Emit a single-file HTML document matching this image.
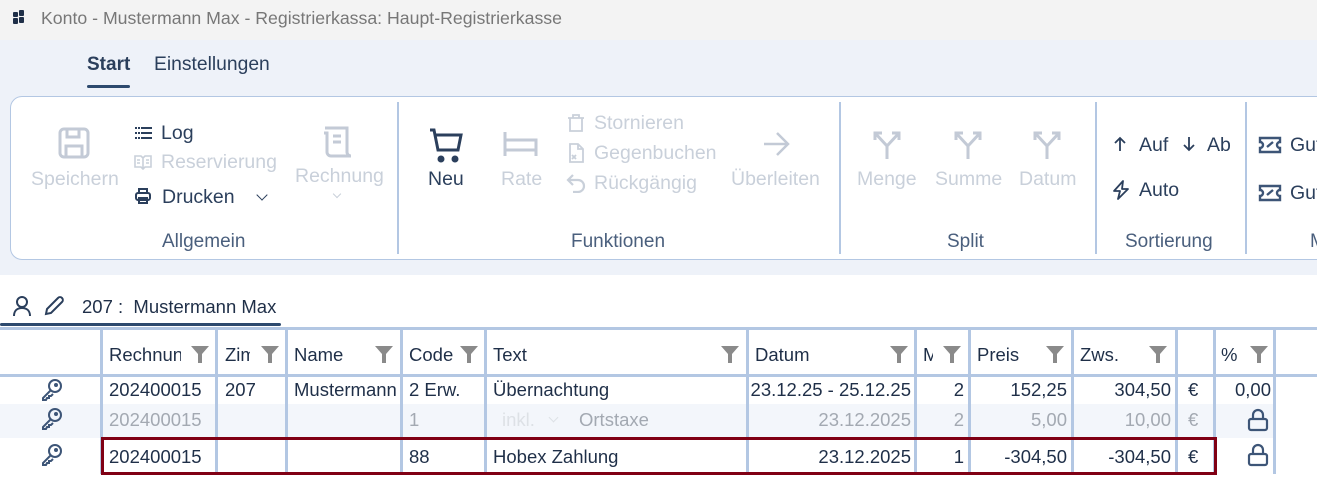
<!DOCTYPE html>
<html><head><meta charset="utf-8"><style>
*{box-sizing:border-box;margin:0;padding:0}
body{width:1317px;height:490px;overflow:hidden;background:#fff;font-family:"Liberation Sans",sans-serif;position:relative;color:#2b3f5c}
.a{position:absolute;white-space:nowrap}
.dis{color:#c9d0da}
.rb{font-size:19.5px}
.gl{font-size:19px;color:#4a5f7d}
.sep{position:absolute;top:102px;width:2px;height:152px;background:#b3c7e3}
.t{font-size:18.5px;color:#1f2f48}
.vl{position:absolute;width:3px;background:#b3c7e3;top:329px;height:145px}
.f{position:absolute;width:20px;height:20px}
</style></head><body>
<div class="a" style="left:0;top:0;width:1317px;height:40px;background:#f3f3f3"></div>
<div class="a" style="left:13px;top:12px;width:5px;height:5px;background:#1f2f48;border-radius:1px"></div>
<div class="a" style="left:19px;top:10px;width:5px;height:6px;background:#1f2f48;border-radius:1px"></div>
<div class="a" style="left:13px;top:18px;width:5px;height:6px;background:#1f2f48;border-radius:1px"></div>
<div class="a" style="left:19px;top:17px;width:5px;height:6px;background:#1f2f48;border-radius:1px"></div>
<div class="a" style="left:41px;top:8px;font-size:17.7px;color:#777">Konto - Mustermann Max - Registrierkassa: Haupt-Registrierkasse</div>
<div class="a" style="left:0;top:40px;width:1317px;height:235px;background:#eef2f9"></div>
<div class="a" style="left:87px;top:54px;font-size:19px;font-weight:bold;color:#2b3f5c">Start</div>
<div class="a" style="left:87px;top:85px;width:43px;height:3px;background:#2d4a6e;border-radius:2px"></div>
<div class="a" style="left:154px;top:54px;font-size:19.3px;color:#2b3f5c">Einstellungen</div>
<div class="a" style="left:10px;top:96px;width:1330px;height:164px;background:#fff;border:1.5px solid #b3c7e3;border-radius:12px"></div>
<!-- Allgemein -->
<svg class="a" style="left:57px;top:126px" width="34" height="34" viewBox="0 0 34 34" fill="none" stroke="#c3cad6" stroke-width="3"><rect x="3" y="3" width="28" height="28" rx="4"/><path d="M10 3v8h12V3M9 31V20h16v11"/></svg>
<div class="a rb dis" style="left:31px;top:168px">Speichern</div>
<svg class="a" style="left:135px;top:126px" width="17" height="14" fill="#2b3f5c"><rect x="0" y="1" width="2" height="2"/><rect x="3" y="1" width="2" height="2"/><rect x="6" y="1" width="11" height="2"/><rect x="0" y="6" width="2" height="2"/><rect x="3" y="6" width="2" height="2"/><rect x="6" y="6" width="11" height="2"/><rect x="0" y="11" width="2" height="2"/><rect x="3" y="11" width="2" height="2"/><rect x="6" y="11" width="11" height="2"/></svg>
<div class="a rb" style="left:161px;top:122px">Log</div>
<svg class="a" style="left:134px;top:154px" width="18" height="16" viewBox="0 0 18 16" fill="none" stroke="#c9d0da" stroke-width="1.6"><path d="M1 2h6l2 2 2-2h6v11h-6l-2 2-2-2H1zM9 4v11M3 6h3M3 9h3M12 6h3M12 9h3"/></svg>
<div class="a rb dis" style="left:161px;top:151px">Reservierung</div>
<svg class="a" style="left:134px;top:187px" width="18" height="18" viewBox="0 0 18 18" fill="none" stroke="#2b3f5c" stroke-width="2"><rect x="5" y="2" width="8" height="4"/><rect x="2" y="6" width="14" height="7" rx="2"/><rect x="5" y="11" width="8" height="5"/></svg>
<div class="a rb" style="left:162px;top:186px">Drucken</div>
<div class="a" style="left:258px;top:191px;width:8px;height:8px;border-right:1.5px solid #2b3f5c;border-bottom:1.5px solid #2b3f5c;transform:rotate(45deg)"></div>
<svg class="a" style="left:321px;top:125px" width="34" height="34" viewBox="0 0 34 34" fill="none" stroke="#c3cad6" stroke-width="3"><path d="M4 3h22v24a4 4 0 0 0 4 4H10a4 4 0 0 1-4-4V8H3M12 11h8M12 17h8"/></svg>
<div class="a rb dis" style="left:295px;top:165px">Rechnung</div>
<div class="a" style="left:334px;top:191px;width:6px;height:6px;border-right:1px solid #c9d0da;border-bottom:1px solid #c9d0da;transform:rotate(45deg)"></div>
<div class="a gl" style="left:162px;top:231px">Allgemein</div>
<div class="sep" style="left:397px"></div>
<!-- Funktionen -->
<svg class="a" style="left:428px;top:127px" width="36" height="36" viewBox="0 0 36 36" fill="none" stroke="#2b3f5c" stroke-width="3"><path d="M2 3h4l4 20h20l3-15H8"/><circle cx="13" cy="32" r="2" fill="#2b3f5c"/><circle cx="27" cy="32" r="2" fill="#2b3f5c"/></svg>
<div class="a rb" style="left:428px;top:168px">Neu</div>
<svg class="a" style="left:503px;top:130px" width="36" height="28" viewBox="0 0 36 28" fill="none" stroke="#c3cad6" stroke-width="3"><path d="M2 2v24M2 10h31v16M2 20h31"/></svg>
<div class="a rb dis" style="left:501px;top:168px">Rate</div>
<svg class="a" style="left:567px;top:113px" width="18" height="20" viewBox="0 0 18 20" fill="none" stroke="#c9d0da" stroke-width="1.8"><path d="M3 5h12v13H3zM1 5h16M6 5V2h6v3"/></svg>
<div class="a rb dis" style="left:594px;top:112px">Stornieren</div>
<svg class="a" style="left:567px;top:143px" width="18" height="20" viewBox="0 0 18 20" fill="none" stroke="#c9d0da" stroke-width="1.8"><path d="M3 1h8l5 5v13H3zM11 1v5h5M5 12l4 4M9 12l-4 4"/></svg>
<div class="a rb dis" style="left:594px;top:142px">Gegenbuchen</div>
<svg class="a" style="left:566px;top:173px" width="20" height="20" viewBox="0 0 20 20" fill="none" stroke="#c9d0da" stroke-width="2.2"><path d="M7 2L2 7l5 5M2 7h10a6 6 0 0 1 0 12H7"/></svg>
<div class="a rb dis" style="left:594px;top:172px">Rückgängig</div>
<svg class="a" style="left:762px;top:131px" width="28" height="26" viewBox="0 0 28 26" fill="none" stroke="#c3cad6" stroke-width="2.5"><path d="M2 13h24M15 2l11 11-11 11"/></svg>
<div class="a rb dis" style="left:731px;top:168px">Überleiten</div>
<div class="a gl" style="left:571px;top:231px">Funktionen</div>
<div class="sep" style="left:839px"></div>
<!-- Split -->
<svg class="a" style="left:871px;top:128px" width="32" height="32" viewBox="0 0 32 32" fill="none" stroke="#c3cad6" stroke-width="3"><path d="M16 31V18L4 5M4 12V5h7M16 18L28 5M21 5h7v7"/></svg>
<svg class="a" style="left:952px;top:128px" width="32" height="32" viewBox="0 0 32 32" fill="none" stroke="#c3cad6" stroke-width="3"><path d="M16 31V18L4 5M4 12V5h7M16 18L28 5M21 5h7v7"/></svg>
<svg class="a" style="left:1031px;top:128px" width="32" height="32" viewBox="0 0 32 32" fill="none" stroke="#c3cad6" stroke-width="3"><path d="M16 31V18L4 5M4 12V5h7M16 18L28 5M21 5h7v7"/></svg>
<div class="a rb dis" style="left:857px;top:168px">Menge</div>
<div class="a rb dis" style="left:935px;top:168px">Summe</div>
<div class="a rb dis" style="left:1019px;top:168px">Datum</div>
<div class="a gl" style="left:947px;top:231px">Split</div>
<div class="sep" style="left:1095px"></div>
<svg class="a" style="left:1113px;top:136px" width="14" height="16" viewBox="0 0 14 16" fill="none" stroke="#2b3f5c" stroke-width="1.8"><path d="M7 15V2M2 7l5-5 5 5"/></svg>
<div class="a rb" style="left:1139px;top:134px">Auf</div>
<svg class="a" style="left:1182px;top:136px" width="14" height="16" viewBox="0 0 14 16" fill="none" stroke="#2b3f5c" stroke-width="1.8"><path d="M7 1v13M2 9l5 5 5-5"/></svg>
<div class="a rb" style="left:1207px;top:134px">Ab</div>
<svg class="a" style="left:1112px;top:180px" width="18" height="20" viewBox="0 0 18 20" fill="none" stroke="#2b3f5c" stroke-width="1.8" stroke-linejoin="round"><path d="M11 1L2 11h6l-2 8 10-10h-6z"/></svg>
<div class="a rb" style="left:1139px;top:179px">Auto</div>
<div class="a gl" style="left:1125px;top:231px">Sortierung</div>
<div class="sep" style="left:1245px"></div>
<svg class="a" style="left:1258px;top:136px" width="24" height="18" viewBox="0 0 24 18" fill="none" stroke="#3d5577" stroke-width="2.4"><path d="M2 2h20v4a3 3 0 0 0 0 6v4H2v-4a3 3 0 0 0 0-6zM9 11l6-5"/></svg>
<div class="a rb" style="left:1290px;top:134px">Gut</div>
<svg class="a" style="left:1258px;top:184px" width="24" height="18" viewBox="0 0 24 18" fill="none" stroke="#3d5577" stroke-width="2.4"><path d="M2 2h20v4a3 3 0 0 0 0 6v4H2v-4a3 3 0 0 0 0-6zM9 11l6-5"/></svg>
<div class="a rb" style="left:1290px;top:182px">Gut</div>
<div class="a gl" style="left:1310px;top:231px">M</div>
<!-- tab -->
<svg class="a" style="left:12px;top:295px" width="20" height="22" viewBox="0 0 20 22" fill="none" stroke="#2b3f5c" stroke-width="2"><circle cx="10" cy="7" r="5"/><path d="M2 21c0-5 3-8 8-8s8 3 8 8"/></svg>
<svg class="a" style="left:43px;top:295px" width="22" height="22" viewBox="0 0 22 22" fill="none" stroke="#2b3f5c" stroke-width="2"><path d="M3 19l1-5L15 3a2.5 2.5 0 0 1 4 4L8 18z"/></svg>
<div class="a" style="left:82px;top:296px;font-size:18.5px;color:#1f2f48">207 :&nbsp; Mustermann Max</div>
<div class="a" style="left:0;top:323px;width:281px;height:3px;background:#2d4a6e;border-radius:2px"></div>
<!-- table -->
<div class="a" style="left:0;top:327px;width:1317px;height:3px;background:#b3c7e3"></div>
<div class="a" style="left:0;top:374px;width:1317px;height:3px;background:#b3c7e3"></div>
<div class="a" style="left:0;top:404px;width:1275px;height:34px;background:#f3f6fb"></div>
<div class="vl" style="left:100px"></div><div class="vl" style="left:215px"></div><div class="vl" style="left:285px"></div><div class="vl" style="left:400px"></div><div class="vl" style="left:484px"></div><div class="vl" style="left:746px"></div><div class="vl" style="left:914px"></div><div class="vl" style="left:968px"></div><div class="vl" style="left:1071px"></div><div class="vl" style="left:1175px"></div><div class="vl" style="left:1213px"></div><div class="vl" style="left:1273px"></div>
<div class="a t" style="left:109px;top:344px;width:72px;overflow:hidden">Rechnung</div>
<div class="a t" style="left:225px;top:344px;width:25px;overflow:hidden">Zimmer</div>
<div class="a t" style="left:294px;top:344px">Name</div>
<div class="a t" style="left:409px;top:344px">Code</div>
<div class="a t" style="left:493px;top:344px">Text</div>
<div class="a t" style="left:755px;top:344px">Datum</div>
<div class="a t" style="left:923px;top:344px;width:10px;overflow:hidden">M</div>
<div class="a t" style="left:977px;top:344px">Preis</div>
<div class="a t" style="left:1080px;top:344px">Zws.</div>
<div class="a t" style="left:1221px;top:344px">%</div>
<svg width="0" height="0" style="position:absolute"><defs><path id="fn" d="M1 2h18l-7 8v9h-4v-9z" fill="#8a8a8a"/></defs></svg>
<svg class="f" style="left:190px;top:344px"><use href="#fn"/></svg>
<svg class="f" style="left:260px;top:344px"><use href="#fn"/></svg>
<svg class="f" style="left:374px;top:344px"><use href="#fn"/></svg>
<svg class="f" style="left:459px;top:344px"><use href="#fn"/></svg>
<svg class="f" style="left:720px;top:344px"><use href="#fn"/></svg>
<svg class="f" style="left:889px;top:344px"><use href="#fn"/></svg>
<svg class="f" style="left:942px;top:344px"><use href="#fn"/></svg>
<svg class="f" style="left:1045px;top:344px"><use href="#fn"/></svg>
<svg class="f" style="left:1148px;top:344px"><use href="#fn"/></svg>
<svg class="f" style="left:1249px;top:344px"><use href="#fn"/></svg>
<!-- keys -->
<svg width="0" height="0" style="position:absolute"><defs><g id="key" fill="none" stroke="#3d5577" stroke-width="2"><circle cx="15" cy="8" r="6"/><path d="M11 12L3 20v2h3l1-2h2v-2h2l2-2"/><circle cx="16" cy="7" r="1"/></g></defs></svg>
<svg class="a" style="left:40px;top:378px" width="24" height="24"><use href="#key"/></svg>
<svg class="a" style="left:40px;top:407px" width="24" height="24"><use href="#key"/></svg>
<svg class="a" style="left:40px;top:443px" width="24" height="24"><use href="#key"/></svg>
<!-- row1 -->
<div class="a t" style="left:109px;top:379px">202400015</div>
<div class="a t" style="left:225px;top:379px">207</div>
<div class="a t" style="left:294px;top:379px">Mustermann</div>
<div class="a t" style="left:409px;top:379px">2 Erw.</div>
<div class="a t" style="left:493px;top:379px">Übernachtung</div>
<div class="a t" style="right:406px;top:379px">23.12.25 - 25.12.25</div>
<div class="a t" style="right:353px;top:379px">2</div>
<div class="a t" style="right:250px;top:379px">152,25</div>
<div class="a t" style="right:146px;top:379px">304,50</div>
<div class="a t" style="left:1188px;top:379px">€</div>
<div class="a t" style="right:46px;top:379px">0,00</div>
<!-- row2 -->
<div class="a t" style="left:109px;top:409px;color:#a3a9b2">202400015</div>
<div class="a t" style="left:409px;top:409px;color:#a3a9b2">1</div>
<div class="a t" style="left:502px;top:409px;color:#dde1e6">inkl.</div>
<div class="a" style="left:550px;top:414px;width:7px;height:7px;border-right:1px solid #dde1e6;border-bottom:1px solid #dde1e6;transform:rotate(45deg)"></div>
<div class="a t" style="left:579px;top:409px;color:#a3a9b2">Ortstaxe</div>
<div class="a t" style="right:406px;top:409px;color:#a3a9b2">23.12.2025</div>
<div class="a t" style="right:353px;top:409px;color:#a3a9b2">2</div>
<div class="a t" style="right:250px;top:409px;color:#a3a9b2">5,00</div>
<div class="a t" style="right:146px;top:409px;color:#a3a9b2">10,00</div>
<div class="a t" style="left:1188px;top:409px;color:#a3a9b2">€</div>
<svg class="a" style="left:1247px;top:408px" width="22" height="24" viewBox="0 0 22 24" fill="none" stroke="#3d5577" stroke-width="2.2"><path d="M6 11V7a5 5 0 0 1 10 0v4"/><rect x="2" y="11" width="18" height="11" rx="2"/></svg>
<!-- row3 -->
<div class="a" style="left:101px;top:437px;width:1116px;height:38px;border:3px solid #800014;background:transparent"></div>
<div class="a t" style="left:109px;top:446px">202400015</div>
<div class="a t" style="left:409px;top:446px">88</div>
<div class="a t" style="left:493px;top:446px">Hobex Zahlung</div>
<div class="a t" style="right:406px;top:446px">23.12.2025</div>
<div class="a t" style="right:353px;top:446px">1</div>
<div class="a t" style="right:250px;top:446px">-304,50</div>
<div class="a t" style="right:146px;top:446px">-304,50</div>
<div class="a t" style="left:1188px;top:446px">€</div>
<svg class="a" style="left:1247px;top:443px" width="22" height="24" viewBox="0 0 22 24" fill="none" stroke="#3d5577" stroke-width="2.2"><path d="M6 11V7a5 5 0 0 1 10 0v4"/><rect x="2" y="11" width="18" height="11" rx="2"/></svg>
</body></html>
